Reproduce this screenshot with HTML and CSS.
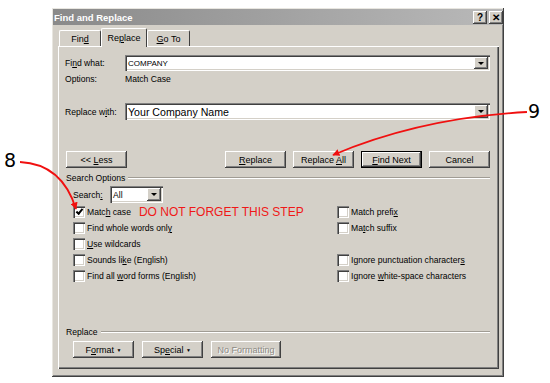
FILE: index.html
```html
<!DOCTYPE html>
<html lang="en">
<head>
  <meta charset="UTF-8" />
  <title>Find and Replace</title>
  <link rel="stylesheet" href="styles.css">
</head>
<body>
  <div class="dialog">
    <div class="titlebar">
      <span class="title">Find and Replace</span>
      <span class="tb-btns"><span class="tb-btn">?</span><span class="tb-btn">✕</span></span>
    </div>

    <div class="tabs">
      <div class="tab"><span>Fin<u>d</u></span></div>
      <div class="tab active"><span>Re<u>p</u>lace</span></div>
      <div class="tab"><span><u>G</u>o To</span></div>
    </div>

    <div class="panel">
      <div class="row find-row">
        <span class="label">Fi<u>n</u>d what:</span>
        <div class="combo"><span class="combo-text small">COMPANY</span><span class="combo-arrow"></span></div>
      </div>
      <div class="row options-row">
        <span class="label">Options:</span>
        <span>Match Case</span>
      </div>
      <div class="row replace-row">
        <span class="label">Replace w<u>i</u>th:</span>
        <div class="combo tall"><span class="combo-text big">Your Company Name</span><span class="combo-arrow"></span></div>
      </div>

      <div class="btn-row">
        <button class="btn">&lt;&lt; <u>L</u>ess</button>
        <div class="btn-group">
          <button class="btn"><u>R</u>eplace</button>
          <button class="btn">Replace <u>A</u>ll</button>
          <button class="btn default"><u>F</u>ind Next</button>
          <button class="btn">Cancel</button>
        </div>
      </div>

      <div class="group-title"><span>Search Options</span></div>
      <div class="search-row">
        <span class="search-label">Search<u>:</u></span>
        <div class="combo select"><span class="combo-text">All</span><span class="combo-arrow"></span></div>
      </div>

      <div class="opts">
        <div class="opt"><span class="box checked"></span><span>Matc<u>h</u> case</span><span class="note">DO NOT FORGET THIS STEP</span></div>
        <div class="opt"><span class="box"></span><span>Match prefi<u>x</u></span></div>
        <div class="opt"><span class="box"></span><span>Find whole words onl<u>y</u></span></div>
        <div class="opt"><span class="box"></span><span>Ma<u>t</u>ch suffix</span></div>
        <div class="opt"><span class="box"></span><span><u>U</u>se wildcards</span></div>
        <div class="opt"></div>
        <div class="opt"><span class="box"></span><span>Sounds li<u>k</u>e (English)</span></div>
        <div class="opt"><span class="box"></span><span>Ignore punctuation character<u>s</u></span></div>
        <div class="opt"><span class="box"></span><span>Find all <u>w</u>ord forms (English)</span></div>
        <div class="opt"><span class="box"></span><span>Ignore <u>w</u>hite-space characters</span></div>
      </div>

      <div class="group-title replace-title"><span>Replace</span></div>
      <div class="bottom-row">
        <button class="btn">F<u>o</u>rmat <span class="caret">▼</span></button>
        <button class="btn">Sp<u>e</u>cial <span class="caret">▼</span></button>
        <button class="btn wide" disabled>No Formatting</button>
      </div>
    </div>
  </div>

  <!-- annotations drawn over the screenshot -->
  <svg class="notes" width="550" height="383" viewBox="0 0 550 383">
    <defs>
      <marker id="head" viewBox="0 0 10 10" refX="9" refY="5" markerWidth="4" markerHeight="4" orient="auto" markerUnits="strokeWidth">
        <path d="M0 0 L10 5 L0 10 z" fill="#f01010" />
      </marker>
    </defs>
    <text x="4" y="167" class="num">8</text>
    <path d="M20 162 Q62 164 76 209" fill="none" stroke="#f01010" stroke-width="1.8" marker-end="url(#head)" />
    <text x="528" y="118" class="num">9</text>
    <path d="M527 112 Q420 118 333 155" fill="none" stroke="#f01010" stroke-width="1.8" marker-end="url(#head)" />
  </svg>
</body>
</html>
```

FILE: styles.css
```css
* {
  margin: 0;
  padding: 0;
  box-sizing: border-box;
}

body {
  width: 550px;
  height: 383px;
  overflow: hidden;
  position: relative;
  background: #fff;
  font-family: 'Liberation Sans', Arial, sans-serif;
  font-size: 8.6px;
  color: #000;
}

u {
  text-decoration: underline;
  text-underline-offset: 1px;
}

.dialog {
  margin: 8px 0 0 52px;
  width: 452px;
  height: 369px;
  padding: 1px;
  background: #d4d0c8;
  box-shadow: inset -1px -1px #404040, inset 1px 1px #e8e6e0, inset -2px -2px #808080;
}

.titlebar {
  height: 16px;
  display: flex;
  justify-content: space-between;
  align-items: center;
  padding-left: 1px;
  background: linear-gradient(to right, #8a8a8a, #b9b9b9);
  color: #fff;
  font-weight: bold;
  font-size: 9.5px;
}

.tb-btns {
  display: flex;
  gap: 2px;
}

.tb-btn {
  width: 14px;
  height: 13px;
  display: flex;
  align-items: center;
  justify-content: center;
  background: #d4d0c8;
  color: #000;
  font-size: 10px;
  font-weight: bold;
  box-shadow: inset -1px -1px #404040, inset 1px 1px #fff, inset -2px -2px #808080;
}

.tabs {
  height: 21px;
  display: flex;
  align-items: flex-end;
  padding-left: 6px;
}

.tab {
  width: 42px;
  height: 16px;
  display: flex;
  align-items: center;
  justify-content: center;
  border-top: 1px solid #fff;
  border-left: 1px solid #fff;
  border-right: 1px solid #404040;
  border-radius: 2px 2px 0 0;
  font-size: 9px;
}

.tab.active {
  width: 46px;
  height: 19px;
  margin-bottom: -1px;
  position: relative;
  z-index: 1;
  background: #d4d0c8;
}

.tab:last-child {
  width: 43px;
}

.panel {
  margin: 0 4px 0 5px;
  height: 323px;
  padding: 9px 9px 0 7px;
  box-shadow: inset 1px 1px #fff, inset -1px -1px #404040, inset -2px -2px #808080;
}

.row {
  display: flex;
  align-items: center;
  height: 16px;
}

.label {
  width: 60px;
  flex-shrink: 0;
}

.replace-row {
  margin-top: 16px;
  height: 17px;
}

.combo {
  flex: 1;
  height: 16px;
  display: flex;
  align-items: center;
  padding: 2px 2px 2px 3px;
  background: #fff;
  box-shadow: inset 1px 1px #808080, inset 2px 2px #404040, inset -1px -1px #fff, inset -2px -2px #d4d0c8;
}

.combo.tall {
  height: 17px;
}

.combo-text {
  flex: 1;
}

.combo-text.small {
  font-size: 8px;
}

.combo-text.big {
  font-size: 10.6px;
}

.combo-arrow {
  width: 14px;
  height: 100%;
  position: relative;
  background: #d4d0c8;
  box-shadow: inset -1px -1px #404040, inset 1px 1px #fff, inset -2px -2px #808080;
}

.combo-arrow::after {
  content: '';
  position: absolute;
  left: 4px;
  top: 5px;
  border-left: 3px solid transparent;
  border-right: 3px solid transparent;
  border-top: 3px solid #000;
}

.btn-row {
  margin-top: 31px;
  display: flex;
  padding-left: 1px;
}

.btn-group {
  margin-left: auto;
  display: flex;
  gap: 7px;
}

.btn {
  width: 61px;
  height: 17px;
  border: none;
  background: #d4d0c8;
  font-family: inherit;
  font-size: 9px;
  color: #000;
  box-shadow: inset -1px -1px #404040, inset 1px 1px #fff, inset -2px -2px #808080;
}

.btn.default {
  box-shadow: inset 0 0 0 1px #000, inset -2px -2px #404040, inset 2px 2px #fff, inset -3px -3px #808080;
}

.btn.wide {
  width: 70px;
}

.btn:disabled {
  color: #8c8a84;
  text-shadow: 1px 1px #fff;
}

.caret {
  font-size: 5px;
  vertical-align: 1px;
}

.group-title {
  margin-top: 3px;
  height: 13px;
  display: flex;
  align-items: center;
  gap: 3px;
  padding-left: 1px;
}

.group-title::after {
  content: '';
  flex: 1;
  border-top: 1px solid #a09c94;
  border-bottom: 1px solid #fff;
}

.replace-title {
  margin-top: 41px;
}

.search-row {
  margin-top: 2px;
  height: 17px;
  display: flex;
  align-items: center;
  padding-left: 8px;
}

.search-label {
  width: 37px;
}

.combo.select {
  flex: none;
  width: 53px;
  height: 17px;
}

.opts {
  margin-top: 1px;
  padding-left: 8px;
  display: grid;
  grid-template-columns: 264px 1fr;
  grid-auto-rows: 16px;
}

.opt {
  display: flex;
  align-items: center;
  white-space: nowrap;
}

.box {
  width: 12px;
  height: 12px;
  margin-right: 2px;
  flex-shrink: 0;
  position: relative;
  background: #fff;
  box-shadow: inset 1px 1px #808080, inset 2px 2px #404040, inset -1px -1px #fff, inset -2px -2px #d4d0c8;
}

.box.checked::after {
  content: '';
  position: absolute;
  left: 3px;
  top: 3px;
  width: 5px;
  height: 2px;
  border-left: 2px solid #000;
  border-bottom: 2px solid #000;
  transform: rotate(-50deg);
}

.note {
  margin-left: 8px;
  color: #f01818;
  font-size: 12px;
}

.bottom-row {
  margin-top: 3px;
  padding-left: 8px;
  display: flex;
  gap: 8px;
}

.notes {
  position: absolute;
  top: 0;
  left: 0;
  pointer-events: none;
}

.num {
  font-family: 'DejaVu Sans', sans-serif;
  font-size: 19px;
  fill: #000;
}
```
